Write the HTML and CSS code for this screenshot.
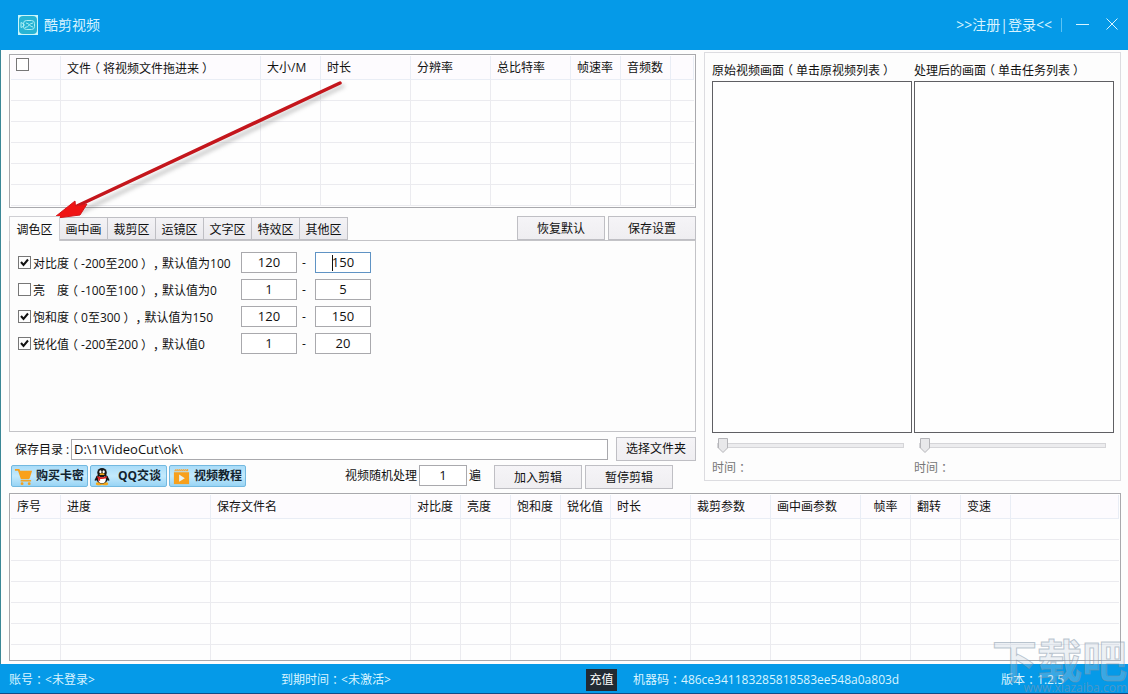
FILE: index.html
```html
<!DOCTYPE html>
<html lang="zh-CN">
<head>
<meta charset="utf-8">
<title>酷剪视频</title>
<link rel="stylesheet" href="styles.css">
</head>
<body>
<header class="titlebar">
  <svg class="logo" viewBox="0 0 20 20" aria-hidden="true">
    <rect width="20" height="20" fill="#c9f6fb"/>
    <rect x="1" y="1" width="18" height="18" rx="4" fill="#27b4d4"/>
    <rect x="5.500" y="5.500" width="11" height="9" rx="3" fill="none" stroke="#a9eef5"/>
    <path d="M3 7.500v5l3-1.500v-2zM7 12.500c4 0 4-4.500 8-4.500M8 8c3 0 4 4 7 4" fill="none" stroke="#a9eef5"/>
  </svg>
  <h1 class="title">酷剪视频</h1>
  <a class="login" href="#">&gt;&gt;注册|登录&lt;&lt;</a>
  <span class="divider"></span>
  <button class="winbtn" aria-label="最小化"><svg viewBox="0 0 14 14"><path d="M0 6.500h13"/></svg></button>
  <button class="winbtn" aria-label="关闭"><svg viewBox="0 0 14 14"><path d="M1.500 .5l11 11M12.500 .5l-11 11"/></svg></button>
</header>

<main class="main">
  <div class="upper">
    <div class="left">
      <div class="listbox">
        <table class="grid">
          <colgroup><col class="w50"><col class="w200"><col class="w60"><col class="w90"><col class="w80"><col class="w80"><col class="w50"><col class="w50"><col></colgroup>
          <thead><tr><th class="pick"><input class="check" type="checkbox" aria-label="全选"></th><th>文件<span class="mid">（</span>将视频文件拖进来<span class="mid">）</span></th><th>大小/M</th><th>时长</th><th>分辨率</th><th>总比特率</th><th>帧速率</th><th>音频数</th><th></th></tr></thead>
          <tbody>
            <tr><td></td><td></td><td></td><td></td><td></td><td></td><td></td><td></td><td></td></tr>
            <tr><td></td><td></td><td></td><td></td><td></td><td></td><td></td><td></td><td></td></tr>
            <tr><td></td><td></td><td></td><td></td><td></td><td></td><td></td><td></td><td></td></tr>
            <tr><td></td><td></td><td></td><td></td><td></td><td></td><td></td><td></td><td></td></tr>
            <tr><td></td><td></td><td></td><td></td><td></td><td></td><td></td><td></td><td></td></tr>
            <tr><td></td><td></td><td></td><td></td><td></td><td></td><td></td><td></td><td></td></tr>
          </tbody>
        </table>
      </div>

      <div class="tabrow">
        <nav class="tabs" role="tablist">
          <button class="tab active" role="tab" aria-selected="true">调色区</button><button class="tab" role="tab">画中画</button><button class="tab" role="tab">裁剪区</button><button class="tab" role="tab">运镜区</button><button class="tab" role="tab">文字区</button><button class="tab" role="tab">特效区</button><button class="tab" role="tab">其他区</button>
        </nav>
        <button class="btn">恢复默认</button>
        <button class="btn">保存设置</button>
      </div>
      <section class="panel">
        <div class="setting">
          <label class="option"><input class="check" type="checkbox" checked>对比度<span class="mid">（</span>-200至200<span class="mid">）</span><span class="comma">，</span>默认值为100</label>
          <input class="num" value="120" aria-label="对比度最小值"><span class="dash">-</span>
          <span class="caretbox"><input class="num focused" value="150" aria-label="对比度最大值"><i class="caret"></i></span>
        </div>
        <div class="setting">
          <label class="option"><input class="check" type="checkbox">亮　度<span class="mid">（</span>-100至100<span class="mid">）</span><span class="comma">，</span>默认值为0</label>
          <input class="num" value="1" aria-label="亮度最小值"><span class="dash">-</span>
          <input class="num" value="5" aria-label="亮度最大值">
        </div>
        <div class="setting">
          <label class="option"><input class="check" type="checkbox" checked>饱和度<span class="mid">（</span>0至300<span class="mid">）</span><span class="comma">，</span>默认值为150</label>
          <input class="num" value="120" aria-label="饱和度最小值"><span class="dash">-</span>
          <input class="num" value="150" aria-label="饱和度最大值">
        </div>
        <div class="setting">
          <label class="option"><input class="check" type="checkbox" checked>锐化值<span class="mid">（</span>-200至200<span class="mid">）</span><span class="comma">，</span>默认值0</label>
          <input class="num" value="1" aria-label="锐化最小值"><span class="dash">-</span>
          <input class="num" value="20" aria-label="锐化最大值">
        </div>
      </section>

      <div class="saverow">
        <label for="dir">保存目录 :</label>
        <input id="dir" class="path" value="D:\1\VideoCut\ok\">
        <button class="btn choose">选择文件夹</button>
      </div>

      <div class="actions">
        <div class="promos">
          <button class="promo"><svg viewBox="0 0 20 20" aria-hidden="true"><path d="M1 3h4l3 9h8" fill="none" stroke="#f5a01c" stroke-width="2"/><path d="M5 4h14l-2.500 8H8z" fill="#f9a11b"/><path d="M7 14.500h11" stroke="#f5a01c" stroke-width="1.500"/><circle cx="8.500" cy="17.500" r="1.500" fill="#f5a01c"/><circle cx="16" cy="17.500" r="1.500" fill="#f5a01c"/></svg><span>购买卡密</span></button>
          <button class="promo"><svg viewBox="0 0 20 20" aria-hidden="true"><ellipse cx="6.500" cy="17.500" rx="3.500" ry="1.700" fill="#f6a718"/><ellipse cx="12.500" cy="17.500" rx="3.500" ry="1.700" fill="#f6a718"/><path d="M4 9L1.500 14l1.500.5 2-2zM15 9l2.500 5-1.500.5-2-2z" fill="#161616"/><ellipse cx="9.500" cy="12" rx="6" ry="5.500" fill="#161616"/><ellipse cx="9.500" cy="13" rx="4" ry="4.200" fill="#fff"/><ellipse cx="9.500" cy="6" rx="5" ry="5" fill="#161616"/><ellipse cx="7.800" cy="5" rx="1.200" ry="1.700" fill="#fff"/><ellipse cx="11.200" cy="5" rx="1.200" ry="1.700" fill="#fff"/><ellipse cx="9.500" cy="7.600" rx="2.800" ry=".9" fill="#f6a718"/><path d="M4.500 9.500q5 2.500 10 0v2q-4 1.500-7 1v2H5.500v-2.500l-1-.5z" fill="#dc2121"/></svg><span class="latin">QQ交谈</span></button>
          <button class="promo"><svg viewBox="0 0 20 20" aria-hidden="true"><path d="M2 4.500l2-2.500h1l-1.500 2.500L6 2h1L5.500 4.500 8 2h1L7.500 4.500 10 2h1L9.500 4.500 12 2h1l-1.500 2.500L14 2h1l-1.500 2.500L16 2h1v2.500z" fill="#f6a63a"/><path d="M2 5.500h16V18H2z" fill="#f7a01d"/><path d="M7.500 8v7.500l6-3.700z" fill="#e8f3f5"/></svg><span>视频教程</span></button>
        </div>
        <label class="times">视频随机处理<input class="num" value="1">遍</label>
        <button class="btn">加入剪辑</button>
        <button class="btn">暂停剪辑</button>
      </div>
    </div>

    <section class="preview">
      <div class="view">
        <h2>原始视频画面<span class="mid">（</span>单击原视频列表<span class="mid">）</span></h2>
        <div class="screen"></div>
        <input class="slider" type="range" value="0" aria-label="原始视频进度">
        <p>时间<span class="mid">：</span></p>
      </div>
      <div class="view">
        <h2>处理后的画面<span class="mid">（</span>单击任务列表<span class="mid">）</span></h2>
        <div class="screen"></div>
        <input class="slider" type="range" value="0" aria-label="处理后进度">
        <p>时间<span class="mid">：</span></p>
      </div>
    </section>
  </div>

  <div class="listbox tasks">
    <table class="grid">
      <colgroup><col class="w50"><col class="w150"><col class="w200"><col class="w50"><col class="w50"><col class="w50"><col class="w50"><col class="w80"><col class="w80"><col class="w90"><col class="w50"><col class="w50"><col class="w50"><col></colgroup>
      <thead><tr><th>序号</th><th>进度</th><th>保存文件名</th><th>对比度</th><th>亮度</th><th>饱和度</th><th>锐化值</th><th>时长</th><th>裁剪参数</th><th>画中画参数</th><th class="center">帧率</th><th>翻转</th><th>变速</th><th></th></tr></thead>
      <tbody>
        <tr><td></td><td></td><td></td><td></td><td></td><td></td><td></td><td></td><td></td><td></td><td></td><td></td><td></td><td></td></tr>
        <tr><td></td><td></td><td></td><td></td><td></td><td></td><td></td><td></td><td></td><td></td><td></td><td></td><td></td><td></td></tr>
        <tr><td></td><td></td><td></td><td></td><td></td><td></td><td></td><td></td><td></td><td></td><td></td><td></td><td></td><td></td></tr>
        <tr><td></td><td></td><td></td><td></td><td></td><td></td><td></td><td></td><td></td><td></td><td></td><td></td><td></td><td></td></tr>
        <tr><td></td><td></td><td></td><td></td><td></td><td></td><td></td><td></td><td></td><td></td><td></td><td></td><td></td><td></td></tr>
        <tr><td></td><td></td><td></td><td></td><td></td><td></td><td></td><td></td><td></td><td></td><td></td><td></td><td></td><td></td></tr>
        <tr><td></td><td></td><td></td><td></td><td></td><td></td><td></td><td></td><td></td><td></td><td></td><td></td><td></td><td></td></tr>
      </tbody>
    </table>
  </div>
</main>

<footer class="status">
  <span>账号<span class="mid">：</span>&lt;未登录&gt;</span>
  <span>到期时间<span class="mid">：</span>&lt;未激活&gt;</span>
  <button class="recharge">充值</button>
  <span>机器码<span class="mid">：</span>486ce341183285818583ee548a0a803d</span>
  <span>版本<span class="mid">：</span>1.2.5</span>
</footer>

<svg class="arrow" viewBox="0 0 310 160" aria-hidden="true">
  <path class="shadow" d="M293 11L30 137" />
  <path d="M290 8L27 131" stroke="#c4161c" stroke-width="3.500" stroke-linecap="round"/>
  <path d="M3 143.500L25 126 25.500 131 37 129 30 140z" fill="#f01414" stroke="#d4161a"/>
</svg>
<div class="watermark" aria-hidden="true"><b>下载吧</b><span>www.xiazaiba.com</span></div>
</body>
</html>
```
FILE: styles.css
```css
* { box-sizing: border-box; }
body {
  margin: 0;
  height: 100vh;
  display: flex;
  flex-direction: column;
  position: relative;
  overflow: hidden;
  background: #fdfdfd;
  color: #111;
  font: 12px/16px "Open Sans", "Noto Sans CJK SC", sans-serif;
}
button, input { font: inherit; color: inherit; margin: 0; }
button { padding: 0; cursor: pointer; white-space: nowrap; }
h1, h2, p { margin: 0; font-size: 12px; font-weight: 400; }
.mid, .comma { display: inline-block; width: 12px; text-align: center; font-family: "Noto Sans CJK SC", sans-serif; line-height: 16px; font-feature-settings: "halt"; }

.titlebar {
  height: 50px;
  flex: none;
  display: flex;
  align-items: center;
  padding: 0 9px 0 18px;
  background: #059ae8;
  color: #d8f4ff;
}
.logo { width: 20px; height: 20px; margin-right: 6px; }
.title { font-size: 14px; flex: 1; }
.login { font-size: 14px; color: inherit; text-decoration: none; }
.divider { width: 1px; height: 14px; margin: 0 14px 0 9px; background: #5cc3f3; }
.winbtn { width: 14px; height: 14px; border: 0; background: none; display: flex; }
.winbtn + .winbtn { margin-left: 15px; }
.winbtn svg { width: 14px; height: 14px; fill: none; stroke: #d8f4ff; }

.main {
  flex: 1;
  min-height: 0;
  display: flex;
  flex-direction: column;
  gap: 4px;
  padding: 2px 7px 3px 8px;
  border-left: 1px solid #3b8796;
}
.upper { display: grid; grid-template-columns: 687fr 417fr; gap: 8px; align-items: start; }
.left { padding-top: 2px; min-width: 0; }

.listbox { border: 1px solid #a9a9ad; padding: 1px; background: #fefefe; overflow: hidden; }
.tasks { flex: 1; min-height: 0; }
.grid { width: 100%; table-layout: fixed; border-collapse: separate; border-spacing: 0; }
.grid th {
  height: 24px;
  padding: 1px 0 0 6px;
  font-weight: 400;
  text-align: left;
  white-space: nowrap;
  background: #fdfbfe;
  border-right: 1px solid #e9edf5;
  border-bottom: 1px solid #e9edf5;
}
.grid th.center { text-align: center; padding-left: 0; }
.grid th.pick { vertical-align: top; padding-top: 2px; padding-left: 5px; }
.grid td { height: 21px; padding: 0; border-right: 1px solid #ebebef; border-bottom: 1px solid #ebebef; }
.grid td:last-child { border-right: 0; }
.w50 { width: 50px; }
.w60 { width: 60px; }
.w80 { width: 80px; }
.w90 { width: 90px; }
.w150 { width: 150px; }
.w200 { width: 200px; }

.check {
  appearance: none;
  flex: none;
  display: block;
  width: 13px;
  height: 13px;
  border: 1px solid #777;
  background: #fff;
}
.check:checked {
  background: url("data:image/svg+xml,%3Csvg xmlns='http://www.w3.org/2000/svg' viewBox='0 0 11 11'%3E%3Cpath d='M2 5l2.500 3L9 2.500' fill='none' stroke='%23111' stroke-width='2'/%3E%3C/svg%3E");
}

.tabrow { display: flex; align-items: flex-end; margin-top: 8px; gap: 3px; height: 24px; }
.tabs { flex: 1; display: flex; align-items: flex-end; height: 25px; }
.tab {
  width: 48px;
  height: 23px;
  border: 1px solid #bfbfc4;
  border-left: 0;
  padding-top: 2px;
  background: linear-gradient(#f4f3f6, #e9e8ec);
}
.tab.active {
  position: relative;
  z-index: 1;
  width: 51px;
  height: 25px;
  border: 1px solid #cfcfd3;
  border-bottom: 0;
  background: #fdfdfd;
  margin-bottom: -1px;
}
.btn {
  width: 88px;
  height: 24px;
  padding-top: 2px;
  border: 1px solid #bfbfc4;
  background: linear-gradient(#f5f4f7, #efeef1);
}
.panel {
  height: 192px;
  border: 1px solid #c3c3c7;
  padding: 11px 8px;
  display: flex;
  flex-direction: column;
  gap: 6px;
}
.setting { display: grid; grid-template-columns: 223px 56px 18px 56px; align-items: center; }
.option { display: flex; align-items: center; white-space: nowrap; padding-top: 2px; }
.option .check { margin: 0 2px 2px 0; }
.num {
  width: 56px;
  height: 21px;
  padding: 0 0 2px;
  border: 1px solid #a9a9ad;
  background: #fff;
  text-align: center;
  font-size: 13px;
}
.num.focused { display: block; border-color: #5f93c4; outline: 0; }
.dash { padding-left: 5px; }
.caretbox { position: relative; }
.caret { position: absolute; left: 17px; top: 3px; width: 1px; height: 16px; background: #111; }

.saverow { display: flex; align-items: center; padding-left: 6px; margin-top: 5px; }
.saverow label { flex: none; width: 56px; white-space: nowrap; padding-top: 2px; }
.path { flex: 1; min-width: 0; height: 21px; border: 1px solid #a9a9ad; padding: 0 2px; background: #fff; font-size: 13px; }
.choose { width: 80px; margin-left: 8px; padding-top: 0; }

.actions { display: flex; align-items: flex-start; margin-top: 4px; padding: 0 23px 0 2px; gap: 3px; }
.promos { flex: 1; display: flex; gap: 2px; }
.promo {
  width: 77px;
  height: 22px;
  display: flex;
  align-items: center;
  gap: 3px;
  padding: 0 2px;
  border: 1px solid #73b9e0;
  border-radius: 2px;
  background: linear-gradient(#a9dcf8, #c4eafc 50%, #98d4f5);
  font-weight: 700;
  color: #12232e;
}
.promo svg { width: 19px; height: 19px; flex: none; }
.promo .latin { flex: 1; }
.times { display: flex; align-items: center; white-space: nowrap; gap: 2px; margin-right: 10px; }
.times .num { width: 48px; }

.preview {
  border: 1px solid #dcdce0;
  padding: 9px 6px 4px 7px;
  display: grid;
  grid-template-columns: 1fr 1fr;
  gap: 2px;
}
.view { display: flex; flex-direction: column; min-width: 0; }
.view h2 { height: 16px; white-space: nowrap; margin-bottom: 3px; }
.view p { color: #777; }
.screen { height: 352px; border: 1px solid #5f5f63; background: #fefefe; }
.slider { appearance: none; display: block; width: auto; height: 15px; margin: 5px 8px 6px 5px; background: none; }
.slider::-webkit-slider-runnable-track { height: 5px; background: #ececee; border: 1px solid #d5d5d8; }
.slider::-webkit-slider-thumb {
  appearance: none;
  width: 10px;
  height: 15px;
  margin-top: -6px;
  background: url("data:image/svg+xml,%3Csvg xmlns='http://www.w3.org/2000/svg' viewBox='0 0 10 15'%3E%3Cpath d='M.5.500h9v9.500l-4.500 4.500-4.500-4.500z' fill='%23e8e8ea' stroke='%23b5b5b9'/%3E%3C/svg%3E");
}

.status {
  flex: none;
  height: 30px;
  display: grid;
  grid-template-columns: 272px 305px 47px 1fr auto;
  align-items: center;
  padding: 2px 64px 0 9px;
  background: #059ae8;
  border-bottom: 1px solid #134a86;
  color: #d8f4ff;
  white-space: nowrap;
}
.recharge { width: 31px; height: 22px; border: 0; background: #222a33; color: #fff; }

.arrow { position: absolute; left: 50px; top: 75px; width: 310px; height: 160px; fill: none; pointer-events: none; }
.shadow { stroke: #777; stroke-width: 3px; stroke-linecap: round; opacity: .5; filter: blur(2px); }
.watermark {
  position: absolute;
  right: 1px;
  bottom: 0;
  width: 136px;
  text-align: right;
  pointer-events: none;
  font-family: "Noto Sans CJK SC", sans-serif;
}
.watermark b { display: block; font-size: 45px; line-height: 46px; color: rgba(190, 205, 220, .3); -webkit-text-stroke: 1px rgba(125, 145, 165, .5); }
.watermark span { display: block; font: 12px/12px "Open Sans", sans-serif; color: rgba(95, 150, 190, .8); }
```
